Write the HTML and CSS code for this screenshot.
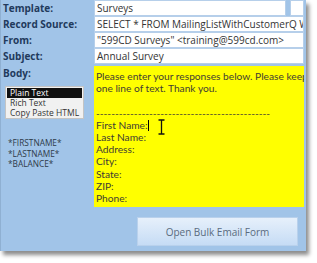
FILE: index.html
```html
<!DOCTYPE html>
<html lang="en">
<head>
  <meta charset="UTF-8">
  <title>Bulk Email Setup</title>
  <link rel="stylesheet" href="styles.css">
</head>
<body>

  <div class="form">
    <div class="row">
      <label>Template:</label>
      <div class="split">
        <div class="box">Surveys</div>
        <div class="box mini"></div>
      </div>
    </div>
    <div class="row">
      <label>Record Source:</label>
      <div class="box">SELECT * FROM MailingListWithCustomerQ WHERE</div>
    </div>
    <div class="row">
      <label>From:</label>
      <div class="box">"599CD Surveys" &lt;training@599cd.com&gt;</div>
    </div>
    <div class="row">
      <label>Subject:</label>
      <div class="box">Annual Survey</div>
    </div>

    <div class="row body-row">
      <div class="side">
        <label>Body:</label>
        <ul class="listbox">
          <li class="selected">Plain Text</li>
          <li>Rich Text</li>
          <li>Copy Paste HTML</li>
        </ul>
        <ul class="tokens">
          <li>*FIRSTNAME*</li>
          <li>*LASTNAME*</li>
          <li>*BALANCE*</li>
        </ul>
      </div>
      <div class="body-box">
        <p>Please enter your responses below. Please keep each answer to</p>
        <p>one line of text. Thank you.</p>
        <p>&nbsp;</p>
        <p>----------------------------------------------</p>
        <p>First Name:<span class="caret"></span><svg class="ibeam" width="7" height="16" viewBox="0 0 7 16"><path d="M0.5 1h6M0.5 15h6M3.5 1v14" stroke="#111" stroke-width="1.3" fill="none"/></svg></p>
        <p>Last Name:</p>
        <p>Address:</p>
        <p>City:</p>
        <p>State:</p>
        <p>ZIP:</p>
        <p>Phone:</p>
      </div>
    </div>

    <div class="actions">
      <button class="open-btn">Open Bulk Email Form</button>
    </div>
  </div>

</body>
</html>
```

FILE: styles.css
```css
:root {
  --panel: #a1c4e8;
  --label: #223a5c;
  --box-border: #b6cfea;
  --ink: #3f3d33;
}
*, *::before, *::after { box-sizing: border-box; margin: 0; padding: 0; }
body {
  background: #fff;
  font-family: 'Open Sans', 'Noto Sans', sans-serif;
  width: 317px;
  height: 263px;
  overflow: hidden;
}
.form {
  width: 306px;
  height: 251px;
  background: var(--panel);
  border-left: 1px solid #8fb0d2;
  box-shadow: 3px 4px 4px rgba(0,0,0,0.45);
  padding: 0 2px 0 0;
  overflow: hidden;
}
.row {
  display: grid;
  grid-template-columns: 93px 1fr;
  height: 16px;
  align-items: center;
}
.row label {
  padding-left: 2px;
  font-size: 10px;
  font-weight: 700;
  color: var(--label);
  white-space: nowrap;
}
.box {
  height: 16px;
  background: #fff;
  border: 1px solid var(--box-border);
  font-size: 10px;
  line-height: 14px;
  padding-left: 2px;
  color: #333;
  white-space: nowrap;
  overflow: hidden;
}
.split {
  display: flex;
  gap: 4px;
}
.split .box { flex: 1; }
.split .mini { flex: 0 0 14px; }

/* body */
.body-row {
  height: auto;
  align-items: start;
  margin-top: 2px;
}
.side {
  display: flex;
  flex-direction: column;
}
.side label { line-height: 14px; }
.listbox {
  list-style: none;
  margin: 6px 0 0 4px;
  width: 79px;
  background: #f1f1f1;
  border: 1px solid #c4c4c4;
  padding: 1px;
  font-size: 8.5px;
  color: #333;
}
.listbox li {
  height: 9.8px;
  line-height: 9.8px;
  padding-left: 3px;
  white-space: nowrap;
}
.listbox li.selected {
  background: #111;
  color: #fff;
}
.tokens {
  list-style: none;
  margin: 19px 0 0 7px;
  font-size: 8.3px;
  line-height: 10.5px;
  color: #2e3a48;
}
.body-box {
  height: 141px;
  background: #ffff00;
  padding: 4px 0 0 2px;
  font-family: 'Lato', 'Open Sans', sans-serif;
  font-size: 10.2px;
  line-height: 12.2px;
  color: var(--ink);
  white-space: nowrap;
  overflow: hidden;
}
.body-box p { height: 12.2px; }
.caret {
  display: inline-block;
  width: 1px;
  height: 11px;
  background: #000;
  vertical-align: -2px;
}
.ibeam {
  margin-left: 9px;
  vertical-align: -6px;
}

/* button */
.actions {
  display: flex;
  justify-content: flex-end;
  padding: 10px 6px 0 0;
}
.open-btn {
  width: 161px;
  height: 29px;
  border: 1px solid #b9d1ec;
  background: linear-gradient(#e6f0fb, #c6dcf5);
  font-family: 'Open Sans', sans-serif;
  font-size: 10px;
  color: #5a6b7e;
}
```
